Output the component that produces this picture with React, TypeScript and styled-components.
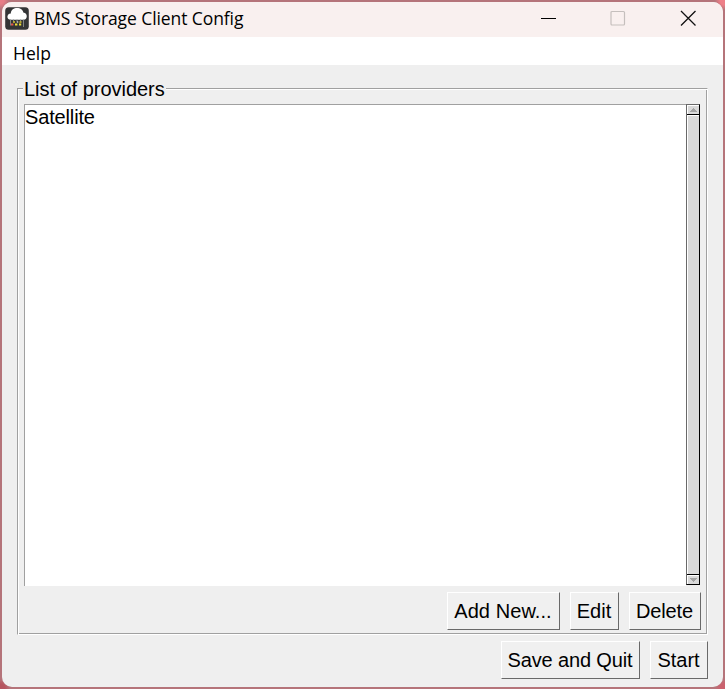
import React from 'react';
import styled, { createGlobalStyle } from 'styled-components';

const Global = createGlobalStyle`
  *, *::before, *::after { box-sizing: border-box; }
  body { margin: 0; overflow: hidden; }
`;

const Desktop = styled.div`
  width: 725px;
  height: 689px;
  padding: 2px;
  background:
    radial-gradient(circle at 0 0, #e77d87 0 4px, transparent 9px),
    radial-gradient(circle at 100% 0, #ee7f88 0 5px, transparent 10px),
    radial-gradient(circle at 100% 100%, #cb626e 0 5px, transparent 10px),
    radial-gradient(circle at 0 100%, #b6545f 0 5px, transparent 10px),
    #b5747a;
`;

const Window = styled.div`
  display: flex;
  flex-direction: column;
  height: 685px;
  width: 721px;
  border-radius: 10px;
  overflow: hidden;
  background: #efefef;
  color: #000;
  font-family: 'Liberation Sans', Arial, sans-serif;
`;

const TitleBar = styled.header`
  display: flex;
  align-items: center;
  flex: none;
  height: 35px;
  padding: 0 27px 3px 3px;
  background: #f9f0ef;
`;

const Title = styled.h1`
  margin: 0 auto 0 5px;
  font: 400 17.5px/24px 'Open Sans', 'Noto Sans', sans-serif;
  letter-spacing: -0.09px;
  white-space: nowrap;
`;

const Controls = styled.div`
  display: grid;
  grid-template-columns: 69px 70px 16px;
`;

const Control = styled.button`
  display: flex;
  width: 16px;
  height: 16px;
  padding: 0;
  border: 0;
  background: none;
`;

const MenuBar = styled.nav`
  flex: none;
  height: 28px;
  padding-left: 11px;
  background: #fff;
  font: 400 17.5px/33px 'Open Sans', 'Noto Sans', sans-serif;
`;

const Content = styled.main`
  display: flex;
  flex-direction: column;
  flex: 1;
  padding: 12px 15px 8px;
`;

const Group = styled.section`
  display: flex;
  flex-direction: column;
  height: 547px;
  margin-top: 11px;
  width: 691px;
  border: 1px solid #a0a0a0;
  border-right-color: #fff;
  border-bottom-color: #fff;
  box-shadow: inset 1px 1px #fff, inset -1px -1px #a0a0a0;
  padding: 0 6px 4px;
`;

const Legend = styled.h2`
  align-self: flex-start;
  flex: none;
  margin: -12px 0 3px -1px;
  padding: 0 1px;
  height: 24px;
  background: #efefef;
  font-size: 20px;
  font-weight: 400;
  line-height: 25px;
  letter-spacing: -0.03px;
`;

const ListRow = styled.div`
  display: flex;
  width: 677px;
  height: 482px;
  flex: none;
`;

const List = styled.ul`
  width: 662px;
  margin: 0;
  padding: 0;
  list-style: none;
  border-top: 1px solid #a0a0a0;
  border-left: 1px solid #a0a0a0;
  background: #fff;
  font-size: 20px;
  line-height: 25px;
  letter-spacing: -0.15px;
`;

const ScrollBar = styled.div`
  display: flex;
  flex-direction: column;
  width: 14px;
  height: 481px;
  border: 1px solid #696969;
  border-right-color: #000;
  border-bottom-color: #000;
`;

const Arrow = styled.div`
  display: flex;
  align-items: flex-end;
  justify-content: center;
  flex: none;
  height: 9px;
  padding-bottom: 2px;
  border-top: 1px solid #fff;
  border-left: 1px solid #fff;
  background: #d9d9d9;
`;

const Thumb = styled.div`
  flex: 1;
  border-top: 1px solid #000;
  border-bottom: 1px solid #000;
  background: #d9d9d9;
  box-shadow: inset 1px 1px #fff;
`;

const ButtonRow = styled.div`
  display: flex;
  justify-content: flex-end;
  gap: 10px;
  margin-top: 6px;
`;

const PushButton = styled.button<{ $width: number; $tracking?: number }>`
  width: ${({ $width }) => $width}px;
  height: 38px;
  padding: 0 1px 0 0;
  border: 1px solid #696969;
  border-top-color: #fff;
  border-left-color: #fff;
  border-radius: 0;
  background: #f0f0f0;
  color: #000;
  font: 400 20px/36px 'Liberation Sans', Arial, sans-serif;
  letter-spacing: ${({ $tracking = 0 }) => $tracking}px;
  white-space: nowrap;
`;

const IconSvg = styled.svg`
  flex: none;
  margin-top: 2px;
`;

const AppIcon = () => (
  <IconSvg width="24" height="24" viewBox="0 0 24 24">
    <rect x="0.2" y="0.2" width="23.6" height="22.6" rx="3.5" fill="#343536" />
    <path
      d="M6 12.8C1.3 12.7 1.3 6.7 5.8 6.4C6 2.9 9 1.1 12 1.1C15.5 1.1 18 3.1 18.3 5.5C23 6.1 22.8 12.6 18.6 12.8Z"
      fill="#fff"
    />
    <path d="M5.5 12.5v6M8.5 12.5v2M12 12.5v3M15.5 12.5v2M18.5 12.5v7.5" stroke="#8b8d8d" strokeWidth="0.9" />
    <path d="M8 15h2M14.5 15h2" stroke="#d9c52e" strokeWidth="1.4" />
    <path d="M6 17.5h2.4" stroke="#e3574c" strokeWidth="2" />
    <path d="M10 17.5h2.4M14 17.5h2.2" stroke="#efdf35" strokeWidth="2" />
    <path d="M12 15h1.3" stroke="#fff" strokeWidth="1" />
  </IconSvg>
);

const ArrowGlyph = ({ down = false }: { down?: boolean }) => (
  <svg width="7" height="4" viewBox="0 0 7 4" shapeRendering="crispEdges">
    <path
      d={down ? 'M0 0h7v1H6v1H5v1H4v1H3V3H2V2H1V1H0z' : 'M0 4h7V3H6V2H5V1H4V0H3v1H2v1H1v1H0z'}
      fill="#a3a3a3"
    />
  </svg>
);

export default function App() {
  return (
    <Desktop>
      <Global />
      <Window>
        <TitleBar>
          <AppIcon />
          <Title>BMS Storage Client Config</Title>
          <Controls>
            <Control aria-label="Minimize">
              <svg width="16" height="16"><path d="M0 8.5h15" stroke="#000" /></svg>
            </Control>
            <Control aria-label="Maximize" disabled>
              <svg width="16" height="16"><rect x="1" y="1.5" width="13.5" height="13.5" rx="1" fill="none" stroke="#c5bfbd" strokeWidth="1.2" /></svg>
            </Control>
            <Control aria-label="Close">
              <svg width="16" height="16"><path d="M1 1l14.5 14.5M15.5 1L1 15.5" stroke="#111" strokeWidth="1.3" /></svg>
            </Control>
          </Controls>
        </TitleBar>
        <MenuBar>Help</MenuBar>
        <Content>
          <Group>
            <Legend>List of providers</Legend>
            <ListRow>
              <List>
                <li>Satellite</li>
              </List>
              <ScrollBar>
                <Arrow><ArrowGlyph /></Arrow>
                <Thumb />
                <Arrow><ArrowGlyph down /></Arrow>
              </ScrollBar>
            </ListRow>
            <ButtonRow>
              <PushButton $width={113} $tracking={0.08}>Add New...</PushButton>
              <PushButton $width={49}>Edit</PushButton>
              <PushButton $width={72} $tracking={-0.1}>Delete</PushButton>
            </ButtonRow>
          </Group>
          <ButtonRow>
            <PushButton $width={139} $tracking={-0.15}>Save and Quit</PushButton>
            <PushButton $width={58}>Start</PushButton>
          </ButtonRow>
        </Content>
      </Window>
    </Desktop>
  );
}
